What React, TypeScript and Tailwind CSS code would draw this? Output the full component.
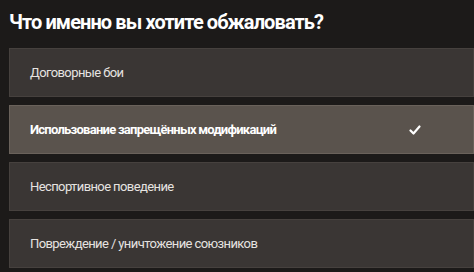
const items = [
  "Договорные бои",
  "Использование запрещённых модификаций",
  "Неспортивное поведение",
  "Повреждение / уничтожение союзников",
];

export default function App() {
  const selected = 1;
  return (
    <div
      className="h-[272px] w-[474px] overflow-hidden bg-[#1c1a19] pl-[9px] text-white"
      style={{ fontFamily: "Roboto, 'Liberation Sans', sans-serif" }}
    >
      <h1 className="pt-[10px] text-[20px] font-bold leading-[24px] tracking-[-0.9px] text-white">
        Что именно вы хотите обжаловать?
      </h1>
      <div className="mt-[14px] flex flex-col gap-[8px]">
        {items.map((label, i) => (
          <div
            key={label}
            className={
              i === selected
                ? "flex h-[49px] items-center border border-[#6a625b] bg-[#5a534d] pl-[20px] pr-[52px]"
                : "flex h-[49px] items-center border border-[#46413e] bg-[#3a3634] pl-[20px] pr-[52px]"
            }
          >
            <span
              className={
                i === selected
                  ? "flex-1 text-[13px] font-bold tracking-[-0.75px] text-white"
                  : "flex-1 text-[13px] tracking-[-0.6px] text-[#e6e3e0]"
              }
            >
              {label}
            </span>
            {i === selected && (
              <svg width="12" height="10" viewBox="0 0 12 10" fill="none">
                <path
                  d="M1.5 5.5 L4.5 8.5 L10.5 1.5"
                  stroke="white"
                  strokeWidth="2.2"
                  strokeLinecap="round"
                  strokeLinejoin="round"
                />
              </svg>
            )}
          </div>
        ))}
      </div>
    </div>
  );
}
